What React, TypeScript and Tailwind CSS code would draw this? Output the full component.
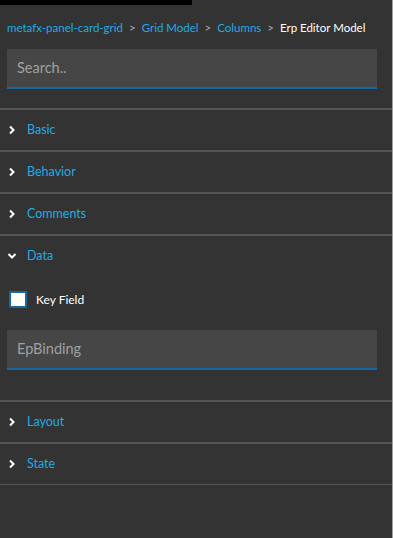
import React from "react";

const Chevron = ({ open }: { open?: boolean }) => (
  <svg width="10" height="10" viewBox="0 0 10 10" className="shrink-0">
    {open ? (
      <polyline points="1.5,3 5,6.5 8.5,3" fill="none" stroke="#fff" strokeWidth="2" />
    ) : (
      <polyline points="3,1.5 6.5,5 3,8.5" fill="none" stroke="#fff" strokeWidth="2" />
    )}
  </svg>
);

const Section = ({ title, open, children }: { title: string; open?: boolean; children?: React.ReactNode }) => (
  <div className="border-t-2 border-[#555555]">
    <div className="h-10 flex items-center pl-[7px] gap-[10px]">
      <Chevron open={open} />
      <span className="text-[12.5px] text-[#22aae4]">{title}</span>
    </div>
    {children}
  </div>
);

const App = () => {
  return (
    <div
      className="w-[393px] h-[538px] bg-[#333333] border-r border-[#a0a0a0] flex flex-col"
      style={{ fontFamily: 'Lato, "Liberation Sans", sans-serif' }}
    >
      <div className="h-[5px] w-[192px] bg-black shrink-0" />
      <div className="flex items-center h-[44px] pl-[7px] pt-[1px] text-[11.5px] gap-[6px] whitespace-nowrap">
        <span className="text-[#22aae4]">metafx-panel-card-grid</span>
        <span className="text-[#aaaaaa]">&gt;</span>
        <span className="text-[#22aae4]">Grid Model</span>
        <span className="text-[#aaaaaa]">&gt;</span>
        <span className="text-[#22aae4]">Columns</span>
        <span className="text-[#aaaaaa]">&gt;</span>
        <span className="text-white">Erp Editor Model</span>
      </div>
      <div className="px-[7px] pr-[15px]">
        <div className="h-10 bg-[#464646] border-b-2 border-[#1668a0] flex items-center pl-[10px] text-[14.5px] text-[#a0a0a0]">
          Search..
        </div>
      </div>
      <div className="mt-[19px]">
        <Section title="Basic" />
        <Section title="Behavior" />
        <Section title="Comments" />
        <Section title="Data" open>
          <div className="flex items-center gap-[9px] pl-[9px] mt-[15px] h-[17px]">
            <div className="w-[18px] h-[17px] bg-white border-2 border-[#1668a0] rounded-[1px]" />
            <span className="text-[12px] text-white">Key Field</span>
          </div>
          <div className="px-[7px] pr-[15px] mt-[22px] mb-[30px]">
            <div className="h-10 bg-[#464646] border-b-2 border-[#1668a0] flex items-center pl-[10px] text-[14.5px] text-[#a0a0a0]">
              EpBinding
            </div>
          </div>
        </Section>
        <Section title="Layout" />
        <Section title="State" />
        <div className="border-t border-[#555555]" />
      </div>
    </div>
  );
};

export default App;
